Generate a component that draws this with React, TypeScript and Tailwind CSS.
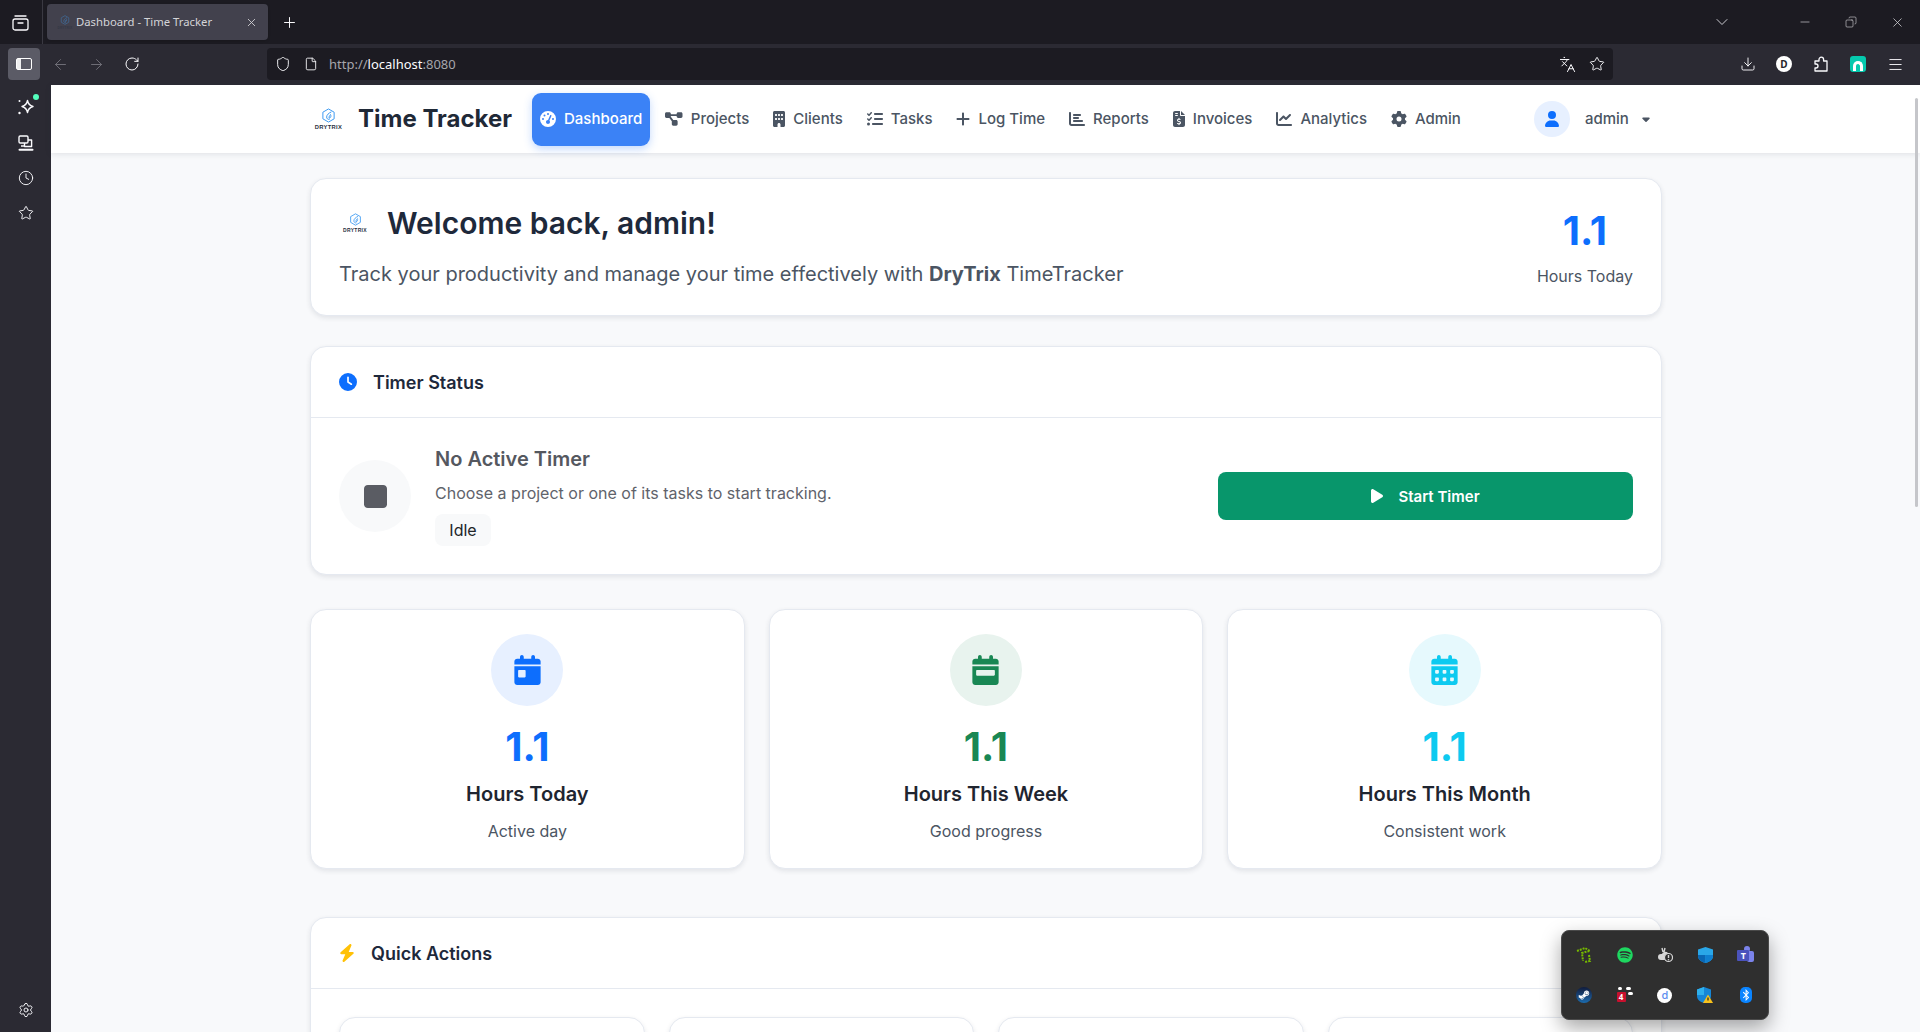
import React from "react";
import {
  ArrowLeft, ArrowRight, RotateCw, Shield, File, Languages, Star,
  Download, Menu, ChevronDown, Minus, Copy, X, Plus, Clock, Settings,
} from "lucide-react";
import {
  FaGaugeHigh, FaDiagramProject, FaBuilding, FaListCheck, FaPlus, FaChartBar, FaFileInvoiceDollar,
  FaChartLine, FaGear, FaUser, FaCaretDown, FaClock, FaStop, FaPlay, FaCalendarDay, FaCalendarWeek,
  FaCalendarDays, FaBolt, FaSpotify, FaSteamSymbol, FaBluetoothB,
} from "react-icons/fa6";

function Logo({ hex, text }: { hex: number; text: string }) {
  return (
    <div className="flex flex-col items-center">
      <svg width={hex} height={hex} viewBox="0 0 24 24" fill="none" stroke="#3f9bf2" strokeWidth="1.6" strokeLinejoin="round">
        <path d="M12 1.5 21 6.7v10.6L12 22.5 3 17.3V6.7z" />
        <path d="M16 6.5c-3.5 1.5-7 4.5-7 8 0 2.5 2 4 4 4" strokeLinecap="round" />
        <path d="M15.5 10.5c-2 1.500-3 3.500-2.500 6 1.800-.6 3-2.200 3-4" strokeLinecap="round" />
      </svg>
      <span className={`${text} font-['Liberation_Sans',sans-serif] font-bold text-[#27303f] tracking-[0.3px] leading-none mt-[2px]`}>DRYTRIX</span>
    </div>
  );
}

const navItems = [
  { label: "Projects", Icon: FaDiagramProject, w: "w-[17.5px]", extra: "-ml-[1px]" },
  { label: "Clients", Icon: FaBuilding, w: "w-[12px]", extra: "" },
  { label: "Tasks", Icon: FaListCheck, w: "w-[16px]", extra: "" },
  { label: "Log Time", Icon: FaPlus, w: "w-[14px]", extra: "" },
  { label: "Reports", Icon: FaChartBar, w: "w-[16px]", extra: "" },
  { label: "Invoices", Icon: FaFileInvoiceDollar, w: "w-[12px]", extra: "" },
  { label: "Analytics", Icon: FaChartLine, w: "w-[16px]", extra: "" },
  { label: "Admin", Icon: FaGear, w: "w-[16px]", extra: "" },
];

const stats = [
  { value: "1.1", title: "Hours Today", sub: "Active day", Icon: FaCalendarDay, color: "text-[#0d6efd]", bg: "bg-[#e7f0ff]" },
  { value: "1.1", title: "Hours This Week", sub: "Good progress", Icon: FaCalendarWeek, color: "text-[#198754]", bg: "bg-[#e8f3ee]" },
  { value: "1.1", title: "Hours This Month", sub: "Consistent work", Icon: FaCalendarDays, color: "text-[#0dcaf0]", bg: "bg-[#e6f9fd]" },
];

const cardCls = "bg-white border border-[#e5e9f0] rounded-2xl shadow-[0_2px_5px_rgba(30,41,59,0.10)]";

function BrowserChrome() {
  return (
    <div className="shrink-0 font-['Noto_Sans',sans-serif]">
      <div className="h-[44px] bg-[#1c1b22] flex items-center text-[#fbfbfe]">
        <div className="w-[43px] h-[44px] border-r border-[#3a3942] flex items-center justify-center">
          <svg width="17" height="17" viewBox="0 0 17 17" fill="none" stroke="currentColor" strokeWidth="1.3" strokeLinecap="round" className="ml-[-2px]">
            <rect x="1" y="5" width="15" height="11" rx="2" />
            <path d="M3 2h11M6 9h5" />
          </svg>
        </div>
        <div className="ml-[4px] w-[221px] h-[36px] bg-[#42414d] rounded-[4px] flex items-center pl-[10px] pr-[10px] shadow-sm">
          <div className="w-[16px] opacity-50"><Logo hex={10} text="text-[3px]" /></div>
          <span className="ml-[3px] text-[11.3px] text-[#d4d4d8] whitespace-nowrap pt-[1px]">Dashboard - Time Tracker</span>
          <X size={13} strokeWidth={1.6} className="ml-auto text-[#d4d4d8]" />
        </div>
        <Plus size={17} strokeWidth={1.4} className="ml-[13px]" />
        <ChevronDown size={20} strokeWidth={1.2} className="ml-[1414px] text-[#c9c9cf]" />
        <Minus size={14} strokeWidth={1.1} className="ml-[66px] text-[#d8d8dc]" />
        <Copy size={12} strokeWidth={1.2} className="ml-[33px] text-[#d8d8dc] -scale-x-100" />
        <X size={15} strokeWidth={1.2} className="ml-[33px] text-[#d8d8dc]" />
      </div>
      <div className="h-[41px] bg-[#2b2a33] flex items-center text-[#fbfbfe] relative pb-[1px]">
        <div className="ml-[8px] w-[32px] h-[32px] rounded-[4px] bg-[#5b5b66] flex items-center justify-center">
          <div className="w-[16px] h-[12px] rounded-[2px] border-[1.5px] border-white flex"><div className="w-[4px] bg-white/90" /></div>
        </div>
        <ArrowLeft size={17} strokeWidth={1.3} className="ml-[12px] text-[#75747c]" />
        <ArrowRight size={17} strokeWidth={1.3} className="ml-[19px] text-[#75747c]" />
        <RotateCw size={16} strokeWidth={1.5} className="ml-[19px]" />
        <div className="ml-[127px] w-[1346px] h-[32px] bg-[#1c1b22] rounded-[4px] flex items-center pl-[8px]">
          <Shield size={16} strokeWidth={1.4} />
          <File size={14} strokeWidth={1.5} className="ml-[13px]" />
          <span className="ml-[11px] text-[13px] text-[#a6a6ac] whitespace-nowrap pt-[2px]">http://<span className="text-[#fbfbfe]">localhost</span>:8080</span>
          <Languages size={17} strokeWidth={1.4} className="ml-auto" />
          <Star size={16} strokeWidth={1.4} className="ml-[13px] mr-[8px]" />
        </div>
        <Download size={16} strokeWidth={1.4} className="ml-[127px]" />
        <div className="ml-[20px] w-[16px] h-[16px] rounded-full bg-white text-[#26252c] text-[10px] font-bold flex items-center justify-center">D</div>
        <svg width="16" height="16" viewBox="0 0 16 16" fill="none" stroke="currentColor" strokeWidth="1.3" strokeLinejoin="round" className="ml-[21px]">
          <path d="M6 5V3.500a2.300 2.300 0 0 1 4.600 0V5H14v10H2v-3h1a2 2 0 0 0 0-4H2V5z" />
        </svg>
        <div className="ml-[21px] w-[16px] h-[16px] rounded-[3px] bg-[#05c9ae] flex items-end justify-center overflow-hidden">
          <div className="w-[10px] h-[10px] border-[3px] border-white rounded-t-full border-b-0 mb-[1px]" />
        </div>
        <Menu size={17} strokeWidth={1.3} className="ml-[21px]" />
      </div>
    </div>
  );
}

function Sidebar() {
  return (
    <div className="w-[51px] shrink-0 bg-[#2b2a33] flex flex-col items-center text-[#fbfbfe] pt-[13px] pb-[14px]">
      <div className="relative">
        <svg width="18" height="18" viewBox="0 0 18 18" fill="none" stroke="currentColor" strokeWidth="1.4" strokeLinejoin="round">
          <path d="M10.500 2.500c.6 3.200 2 5 5.500 6-3.500 1-4.900 2.800-5.500 6-.6-3.200-2-5-5.500-6 3.500-1 4.900-2.800 5.500-6z" />
          <circle cx="2.500" cy="3" r="1" fill="currentColor" stroke="none" />
          <circle cx="2.500" cy="15" r="1.200" fill="currentColor" stroke="none" />
        </svg>
        <span className="absolute -top-[4px] -right-[4px] w-[6px] h-[6px] rounded-full bg-[#54ffbd]" />
      </div>
      <svg width="16" height="16" viewBox="0 0 16 16" fill="none" stroke="#fbfbfe" strokeWidth="1.4" className="mt-[19px]" strokeLinejoin="round">
        <rect x="1" y="1" width="9" height="7" rx="1.2" />
        <path d="M3 11h4M10 5h3.600v6.500H6.500V8" />
        <path d="M1.500 14.700h13" strokeWidth="2" strokeLinecap="round" />
      </svg>
      <Clock size={16} strokeWidth={1.4} className="mt-[19px]" />
      <Star size={16} strokeWidth={1.4} className="mt-[19px]" />
      <Settings size={16} strokeWidth={1.4} className="mt-auto" />
    </div>
  );
}

function Navbar() {
  return (
    <div className="h-[68px] shrink-0 bg-white shadow-[0_1px_6px_rgba(30,41,59,0.12)] relative z-10">
      <div className="w-[1352px] ml-[259px] h-full flex items-center pl-[5px]">
        <div className="w-[27px] flex justify-center"><Logo hex={15} text="text-[5.8px]" /></div>
        <span className="ml-[16px] text-[24px] font-bold text-[#1f2937] whitespace-nowrap">Time Tracker</span>
        <div className="ml-[20px] flex items-center gap-[8px] text-[15px] font-medium text-[#4b5563]">
          <div className="h-[53px] px-[8px] flex items-center gap-[8px] rounded-[9px] bg-[#3b82f6] text-white shadow-[0_3px_8px_rgba(59,130,246,0.3)]">
            <FaGaugeHigh className="h-4 w-4" />
            <span>Dashboard</span>
          </div>
          {navItems.map(({ label, Icon, w, extra }) => (
            <div key={label} className={`h-[53px] px-[8px] flex items-center gap-[8px] whitespace-nowrap ${extra}`}>
              <Icon className={`h-4 ${w}`} />
              <span>{label}</span>
            </div>
          ))}
        </div>
        <div className="ml-[65px] w-[36px] h-[36px] rounded-full bg-[#e7f0ff] flex items-center justify-center text-[#0d6efd]">
          <FaUser className="h-4 w-[14px]" />
        </div>
        <span className="ml-[15px] text-[15px] font-medium text-[#4b5563]">admin</span>
        <FaCaretDown className="ml-[13px] h-3 w-2 text-[#4b5563]" />
      </div>
    </div>
  );
}

function Tray() {
  return (
    <div className="absolute left-[1561px] top-[930px] w-[208px] h-[90px] rounded-[8px] bg-[#2f2f2f] border border-[#4a4a4a] shadow-[0_8px_20px_rgba(0,0,0,0.35)] grid grid-cols-5 grid-rows-2 px-[2px] py-[4px] z-20">
      <div className="flex items-center justify-center">
        <svg width="16" height="16" viewBox="0 0 16 16" fill="none" stroke="#76b900" strokeWidth="2" strokeDasharray="2 1">
          <path d="M1 4l8-3 5 3-5 1-3 1 1 8M13 8l1 6-5 1" />
        </svg>
      </div>
      <div className="flex items-center justify-center"><FaSpotify className="w-4 h-4 text-[#1ed760]" /></div>
      <div className="flex items-center justify-center">
        <svg width="16" height="16" viewBox="0 0 16 16">
          <path d="M1 10a3 3 0 0 1 3-3h1a3.500 3.500 0 0 1 6-1v7H4a3 3 0 0 1-3-3z" fill="#d8d8d8" />
          <path d="M5 1l1 4M8 1 7 5" stroke="#d8d8d8" strokeWidth="1.400" />
          <circle cx="11.500" cy="10.500" r="4" fill="#2f2f2f" stroke="#d8d8d8" strokeWidth="1.200" />
          <path d="M11.500 8v3" stroke="#d8d8d8" strokeWidth="1.400" />
          <circle cx="11.500" cy="12.700" r=".8" fill="#d8d8d8" />
        </svg>
      </div>
      <div className="flex items-center justify-center">
        <svg width="15" height="16" viewBox="0 0 15 16">
          <path d="M7.500 0 15 2.500V9c0 3.500-3.500 6-7.500 7C3.500 15 0 12.500 0 9V2.500z" fill="#2aa7e8" />
          <path d="M7.500 0V8H0v1c0 3.500 3.500 6 7.500 7z" fill="#0a67b5" />
          <path d="M7.500 8H15v1c0 3.500-3.500 6-7.500 7z" fill="#0f7fd0" />
        </svg>
      </div>
      <div className="flex items-center justify-center">
        <div className="relative w-[17px] h-[17px]">
          <span className="absolute right-0 top-[4px] w-[7px] h-[11px] rounded-[2px] bg-[#7b83eb]" />
          <span className="absolute right-[4px] -top-[1px] w-[6px] h-[6px] rounded-full bg-[#7b83eb]" />
          <span className="absolute left-0 top-[3px] w-[12px] h-[11px] rounded-[1px] bg-[#4b53bc] text-white text-[9px] font-bold leading-[11px] text-center">T</span>
        </div>
      </div>
      <div className="flex items-center justify-center">
        <div className="w-[16px] h-[16px] rounded-full bg-gradient-to-b from-[#101c3c] to-[#1a6cb0] flex items-center justify-center">
          <FaSteamSymbol className="w-[12px] h-[12px] text-white" />
        </div>
      </div>
      <div className="flex items-center justify-center">
        <div className="relative w-[16px] h-[16px]">
          <span className="absolute left-[1px] top-0 w-[4px] h-[3px] rounded-full bg-white" />
          <span className="absolute left-[9px] top-0 w-[5px] h-[3px] rounded-full bg-white" />
          <span className="absolute left-[11px] top-[5px] w-[5px] h-[3px] rounded-full bg-white" />
          <span className="absolute left-0 top-[5px] w-[9px] h-[10px] rounded-[1px] bg-[#c8102e] text-white text-[8px] font-bold leading-[10px] text-center">4</span>
        </div>
      </div>
      <div className="flex items-center justify-center">
        <div className="w-[15px] h-[15px] rounded-full bg-white text-[#5b8def] text-[11px] leading-[14px] text-center font-medium">d</div>
      </div>
      <div className="flex items-center justify-center">
        <svg width="16" height="16" viewBox="0 0 16 16">
          <path d="M7 0l7 2.500V9c0 3.500-3 6-7 7C3 15 0 12.500 0 9V2.500z" fill="#1686d6" />
          <path d="M7 0v8H0V2.500z" fill="#2fb0ec" />
          <path d="M11 7.500l5 8.500H6z" fill="#f8c21c" />
          <path d="M11 10.500v3" stroke="#222" strokeWidth="1.200" />
        </svg>
      </div>
      <div className="flex items-center justify-center">
        <div className="w-[12px] h-[16px] rounded-[5px] bg-[#0a84ff] flex items-center justify-center">
          <FaBluetoothB className="w-[10px] h-[12px] text-white" />
        </div>
      </div>
    </div>
  );
}

export default function App() {
  return (
    <div className="w-[1920px] h-[1032px] overflow-hidden relative flex flex-col bg-[#f8f9fb]">
      <BrowserChrome />
      <div className="flex flex-1 min-h-0">
        <Sidebar />
        <div className="flex-1 min-w-0 flex flex-col font-['Inter',sans-serif] bg-[#f8f9fb]">
          <Navbar />
          <div className="w-[1352px] ml-[259px] pt-[25px]">
            <div className={`${cardCls} h-[138px] pl-[28px] pr-[28px] flex items-center justify-between`}>
              <div>
                <div className="flex items-center">
                  <div className="ml-[4px] w-[24px] flex justify-center"><Logo hex={13} text="text-[5px]" /></div>
                  <h1 className="ml-[20px] text-[30px] leading-[36px] font-semibold text-[#1e293b] whitespace-nowrap">Welcome back, admin!</h1>
                </div>
                <p className="mt-[18px] text-[20px] leading-[30px] text-[#4b5563] whitespace-nowrap">
                  Track your productivity and manage your time effectively with <b className="font-bold">DryTrix</b> TimeTracker
                </p>
              </div>
              <div className="flex flex-col items-center">
                <span className="text-[40px] leading-[48px] font-bold text-[#0d6efd]">1.1</span>
                <span className="mt-[9px] text-[16px] leading-6 text-[#4b5563]">Hours Today</span>
              </div>
            </div>

            <div className={`${cardCls} mt-[30px] h-[229px] flex flex-col`}>
              <div className="h-[71px] border-b border-[#e5e9f0] flex items-center pl-[28px] pr-[28px]">
                <FaClock className="w-[18px] h-[18px] text-[#0d6efd]" />
                <span className="ml-[16px] text-[18px] font-semibold text-[#1e293b]">Timer Status</span>
              </div>
              <div className="flex-1 flex items-center justify-between pl-[28px] pr-[28px]">
                <div className="flex items-center">
                  <div className="w-[72px] h-[72px] rounded-full bg-[#f8f9fa] flex items-center justify-center">
                    <FaStop className="h-[31px] w-[23px] text-[#5a5c63]" />
                  </div>
                  <div className="ml-[24px] pt-[1px]">
                    <div className="text-[20px] leading-6 font-semibold text-[#55585f]">No Active Timer</div>
                    <div className="mt-[10px] text-[16px] leading-6 text-[#5f636b]">Choose a project or one of its tasks to start tracking.</div>
                    <div className="mt-[9px] w-[56px] h-[32px] rounded-[8px] bg-[#f8f9fa] text-[16px] text-[#212529] flex items-center justify-center">Idle</div>
                  </div>
                </div>
                <div className="w-[415px] h-[48px] rounded-[8px] bg-[#08966b] text-white flex items-center justify-center gap-[15px] text-[15px] font-semibold">
                  <FaPlay className="h-4 w-3" />
                  <span className="pt-[2px]">Start Timer</span>
                </div>
              </div>
            </div>

            <div className="mt-[34px] grid grid-cols-3 gap-[24px]">
              {stats.map(({ value, title, sub, Icon, color, bg }) => (
                <div key={title} className={`${cardCls} h-[260px] flex flex-col items-center pt-[24px]`}>
                  <div className={`w-[72px] h-[72px] rounded-full ${bg} flex items-center justify-center`}>
                    <Icon className={`h-[30px] w-[27px] ${color}`} />
                  </div>
                  <div className={`mt-[17px] text-[40px] leading-[48px] font-bold ${color}`}>{value}</div>
                  <div className="mt-[11px] text-[20px] leading-6 font-semibold text-[#1f2530]">{title}</div>
                  <div className="mt-[13px] text-[16px] leading-6 text-[#4b5563]">{sub}</div>
                </div>
              ))}
            </div>

            <div className={`${cardCls} mt-[48px] h-[200px]`}>
              <div className="h-[71px] border-b border-[#e5e9f0] flex items-center pl-[28px] pr-[28px]">
                <FaBolt className="h-[18px] w-[16px] text-[#ffc107]" />
                <span className="ml-[16px] text-[18px] font-semibold text-[#1e293b]">Quick Actions</span>
              </div>
              <div className="pl-[28px] pr-[28px] pt-[28px] grid grid-cols-4 gap-[24px]">
                <div className={`${cardCls} h-[100px]`} />
                <div className={`${cardCls} h-[100px]`} />
                <div className={`${cardCls} h-[100px]`} />
                <div className={`${cardCls} h-[100px]`} />
              </div>
            </div>
          </div>
        </div>
      </div>
      <div className="absolute left-[1915px] top-[98px] w-[3px] h-[409px] rounded-full bg-[#c5c6ca] z-20" />
      <Tray />
    </div>
  );
}
